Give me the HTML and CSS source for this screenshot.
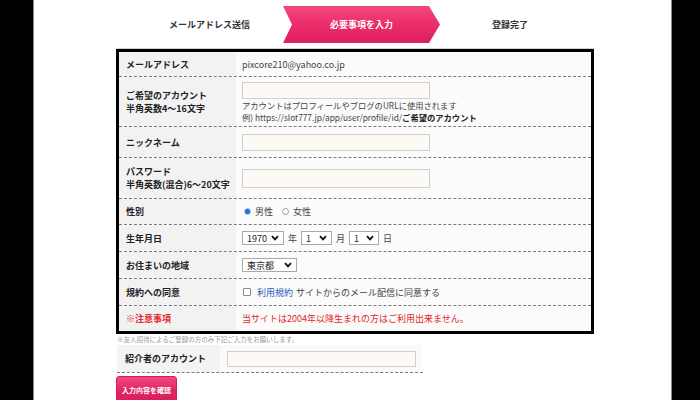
FILE: index.html
```html
<!DOCTYPE html>
<html lang="ja">
<head>
<meta charset="utf-8">
<title>必要事項を入力</title>
<link rel="stylesheet" href="styles.css">
</head>
<body>
<div class="page">
  <div class="steps">
    <div class="step step-first">メールアドレス送信</div>
    <div class="step step-active">必要事項を入力</div>
    <div class="step step-last">登録完了</div>
  </div>

  <div class="form-table">
    <div class="row h25">
      <div class="th">メールアドレス</div>
      <div class="td">pixcore210@yahoo.co.jp</div>
    </div>
    <div class="row h50">
      <div class="th">ご希望のアカウント<br>半角英数4〜16文字</div>
      <div class="td td-stack">
        <input class="text-input" type="text">
        <span class="help">アカウントはプロフィールやブログのURLに使用されます</span>
        <span class="help">例) https://slot777.jp/app/user/profile/id/<b class="help-strong">ご希望のアカウント</b></span>
      </div>
    </div>
    <div class="row h31">
      <div class="th">ニックネーム</div>
      <div class="td"><input class="text-input" type="text"></div>
    </div>
    <div class="row h41">
      <div class="th">パスワード<br>半角英数(混合)6〜20文字</div>
      <div class="td"><input class="text-input tall" type="password"></div>
    </div>
    <div class="row h26">
      <div class="th">性別</div>
      <div class="td">
        <span class="radio radio-on"></span><span class="opt">男性</span>
        <span class="radio"></span><span class="opt">女性</span>
      </div>
    </div>
    <div class="row h27">
      <div class="th">生年月日</div>
      <div class="td inline-gap">
        <span class="select w42">1970<svg class="chev" width="8" height="6" viewBox="0 0 8 6"><path d="M1 1.2 4 4.4 7 1.2" fill="none" stroke="#111" stroke-width="1.8"/></svg></span>
        <span class="unit">年</span>
        <span class="select w31">1<svg class="chev" width="8" height="6" viewBox="0 0 8 6"><path d="M1 1.2 4 4.4 7 1.2" fill="none" stroke="#111" stroke-width="1.8"/></svg></span>
        <span class="unit">月</span>
        <span class="select w30">1<svg class="chev" width="8" height="6" viewBox="0 0 8 6"><path d="M1 1.2 4 4.4 7 1.2" fill="none" stroke="#111" stroke-width="1.8"/></svg></span>
        <span class="unit">日</span>
      </div>
    </div>
    <div class="row h27">
      <div class="th">お住まいの地域</div>
      <div class="td">
        <span class="select w55">東京都<svg class="chev" width="8" height="6" viewBox="0 0 8 6"><path d="M1 1.2 4 4.4 7 1.2" fill="none" stroke="#111" stroke-width="1.8"/></svg></span>
      </div>
    </div>
    <div class="row h27">
      <div class="th">規約への同意</div>
      <div class="td">
        <span class="checkbox"></span><span class="link">利用規約</span><span class="agree-text">サイトからのメール配信に同意する</span>
      </div>
    </div>
    <div class="row h25 last">
      <div class="th warn">※注意事項</div>
      <div class="td warn-text">当サイトは2004年以降生まれの方はご利用出来ません。</div>
    </div>
  </div>

  <p class="note">※友人招待によるご登録の方のみ下記ご入力をお願いします。</p>

  <div class="ref-row">
    <div class="th">紹介者のアカウント</div>
    <div class="td"><input class="text-input" type="text"></div>
  </div>

  <button class="submit" type="button">入力内容を確認</button>
</div>
</body>
</html>
```

FILE: styles.css
```css
* { box-sizing: border-box; }

html, body {
  margin: 0;
  height: 100%;
  overflow: hidden;
}

body {
  background: #000;
  font-family: "Noto Sans CJK JP", "Noto Sans", sans-serif;
  font-size: 9px;
  color: #333;
}

.page {
  margin-left: 33px;
  width: 639px;
  height: 400px;
  background: #fff;
  border-left: 1px solid #8a8a8a;
  border-right: 1px solid #8a8a8a;
  padding-left: 82px;
  padding-right: 76px;
  overflow: hidden;
}

/* steps */
.steps {
  display: flex;
  padding-top: 6px;
  padding-bottom: 5px;
  border-bottom: 1px solid #d4d4d4;
  height: 49px;
}

.step {
  height: 37px;
  display: flex;
  align-items: center;
  justify-content: center;
  font-weight: bold;
  font-size: 9px;
  color: #333;
}

.step-first {
  width: 167px;
  padding-left: 20px;
}

.step-active {
  width: 157px;
  color: #fff;
  background: linear-gradient(#f4497f 0%, #ec2f6c 45%, #de1f5d 100%);
  clip-path: polygon(0 0, calc(100% - 11px) 0, 100% 50%, calc(100% - 11px) 100%, 0 100%, 9px 50%);
}

.step-last {
  width: 154px;
  padding-right: 14px;
}

/* table */
.form-table {
  border: 3px solid #000;
  width: 478px;
}

.row {
  display: grid;
  grid-template-columns: 117px 1fr;
  border-bottom: 1px dashed #7a7a7a;
}

.row.last { border-bottom: none; }

.h25 { height: 25px; }
.h26 { height: 26px; }
.h27 { height: 27px; }
.h31 { height: 31px; }
.h41 { height: 41px; }
.h50 { height: 50px; }

.th {
  background: #f2f2f2;
  padding-left: 7px;
  display: flex;
  align-items: center;
  font-weight: bold;
  line-height: 13px;
  color: #222;
}

.td {
  background: #fbfbfb;
  padding-left: 6px;
  display: flex;
  align-items: center;
  color: #444;
}

.td-stack {
  flex-direction: column;
  align-items: flex-start;
  justify-content: center;
  padding-top: 2px;
}

.help {
  font-size: 8.3px;
  line-height: 12px;
  color: #444;
}

.help-strong {
  color: #222;
  font-weight: 600;
}

.text-input {
  width: 188px;
  height: 17px;
  border: 1px solid #cfcfcf;
  background: #fdfaf6;
  margin: 0;
  padding: 0;
  font: inherit;
}

.text-input.tall { height: 19px; }

/* radios */
.radio {
  width: 7px;
  height: 7px;
  border-radius: 50%;
  border: 1px solid #9a9a9a;
  background: #fff;
  margin-left: 2px;
}

.radio-on {
  border-color: #7fb2ee;
  background: radial-gradient(circle, #1f73dd 0 2.3px, #9cc5f2 2.6px);
}

.opt {
  margin-left: 4px;
  margin-right: 7px;
}

/* selects */
.inline-gap { gap: 4px; }

.select {
  height: 14px;
  border: 1px solid #a9a9a9;
  background: #fff;
  display: inline-flex;
  align-items: center;
  justify-content: space-between;
  padding: 0 4px 0 4px;
  color: #222;
  font-size: 9px;
}

.w42 { width: 42px; }
.w31 { width: 31px; }
.w30 { width: 30px; }
.w55 { width: 55px; }

.chev { display: block; }

.unit { color: #444; }

/* agree */
.checkbox {
  width: 8px;
  height: 8px;
  border: 1px solid #8a8a8a;
  border-radius: 1px;
  background: #fff;
  margin-left: 1px;
  margin-right: 6px;
}

.link {
  color: #2a5cb5;
  margin-right: 3px;
}

.agree-text { color: #444; }

/* warning */
.th.warn { color: #e3262c; }
.warn-text { color: #e3262c; }

/* below the table */
.note {
  margin: 0;
  height: 11px;
  line-height: 11px;
  font-size: 6.5px;
  color: #999;
  padding-left: 1px;
}

.ref-row {
  margin-left: 1px;
  width: 306px;
  height: 28px;
  display: grid;
  grid-template-columns: 103px 1fr;
  border-bottom: 1px dashed #7a7a7a;
}

.ref-row .th {
  background: #f3f3f3;
  padding-left: 8px;
}

.ref-row .td {
  background: #fafafa;
  padding-left: 7px;
}

.ref-row .text-input {
  width: 189px;
  height: 16px;
  margin: 0;
}

.submit {
  display: block;
  margin-top: 3px;
  width: 61px;
  height: 27px;
  border: 1px solid #d51c58;
  border-radius: 3px;
  background: linear-gradient(#f2497e, #e02662 55%, #d81d5a);
  color: #fff;
  font-family: inherit;
  font-weight: bold;
  font-size: 7px;
  padding: 0;
  cursor: pointer;
}
```
